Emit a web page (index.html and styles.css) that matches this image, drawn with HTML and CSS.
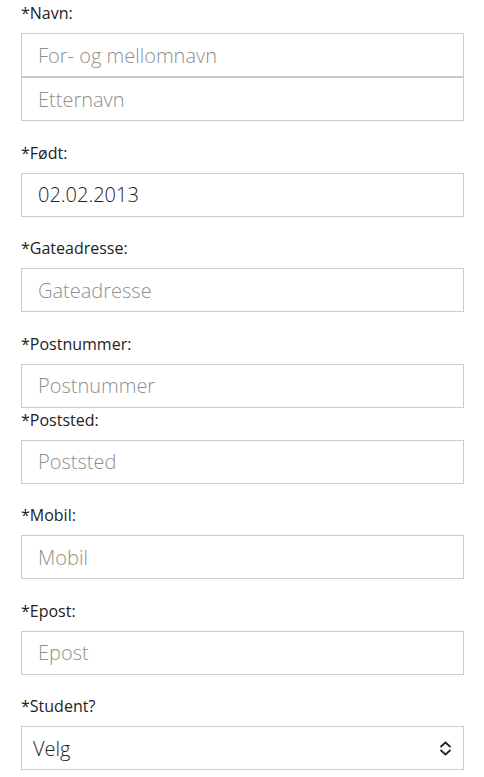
FILE: index.html
```html
<!DOCTYPE html>
<html lang="no">

<head>
    <meta charset="UTF-8">
    <title>Påmelding</title>
    <link rel="stylesheet" href="styles.css">
</head>

<body>
    <form class="skjema">
        <div class="felt">
            <label for="fornavn">*Navn:</label>
            <input type="text" id="fornavn" placeholder="For- og mellomnavn">
            <input type="text" id="etternavn" placeholder="Etternavn">
        </div>
        <div class="felt">
            <label for="fodt">*Født:</label>
            <input type="text" id="fodt" value="02.02.2013">
        </div>
        <div class="felt">
            <label for="gate">*Gateadresse:</label>
            <input type="text" id="gate" placeholder="Gateadresse">
        </div>
        <div class="felt tett">
            <label for="postnr">*Postnummer:</label>
            <input type="text" id="postnr" placeholder="Postnummer">
        </div>
        <div class="felt">
            <label for="poststed">*Poststed:</label>
            <input type="text" id="poststed" placeholder="Poststed">
        </div>
        <div class="felt">
            <label for="mobil">*Mobil:</label>
            <input type="text" id="mobil" placeholder="Mobil">
        </div>
        <div class="felt">
            <label for="epost">*Epost:</label>
            <input type="text" id="epost" placeholder="Epost">
        </div>
        <div class="felt">
            <label for="student">*Student?</label>
            <div class="velg">
                <select id="student">
                    <option>Velg</option>
                    <option>Ja</option>
                    <option>Nei</option>
                </select>
                <svg class="pil" width="13" height="15" viewBox="0 0 13 15">
                    <path d="M1.5 6 L6.5 1.5 L11.5 6 M1.5 9 L6.5 13.5 L11.5 9" fill="none" stroke="#222" stroke-width="1.7"/>
                </svg>
            </div>
        </div>
    </form>
</body></html>
```

FILE: styles.css
```css
* {
    box-sizing: border-box;
}

body {
    margin: 0;
    padding: 2px 20px 0 21px;
    background-color: #fff;
    font-family: 'Open Sans', sans-serif;
}

.felt {
    margin-bottom: 20.5px;
}

.tett {
    margin-bottom: 1px;
}

label {
    display: block;
    font-size: 16px;
    line-height: 22px;
    color: #222;
    margin-bottom: 9px;
}

input,
select {
    display: block;
    width: 100%;
    height: 44px;
    margin: 0;
    border: 1px solid #ccc;
    border-radius: 0;
    padding: 0 16px;
    font-family: 'Open Sans', sans-serif;
    font-size: 20px;
    font-weight: 300;
    color: #222;
    background-color: #fff;
}

input::placeholder {
    color: #8f8f8f;
}

.velg {
    position: relative;
}

select {
    appearance: none;
    padding-left: 11px;
}

.pil {
    position: absolute;
    right: 12px;
    top: 15px;
    pointer-events: none;
}
```
